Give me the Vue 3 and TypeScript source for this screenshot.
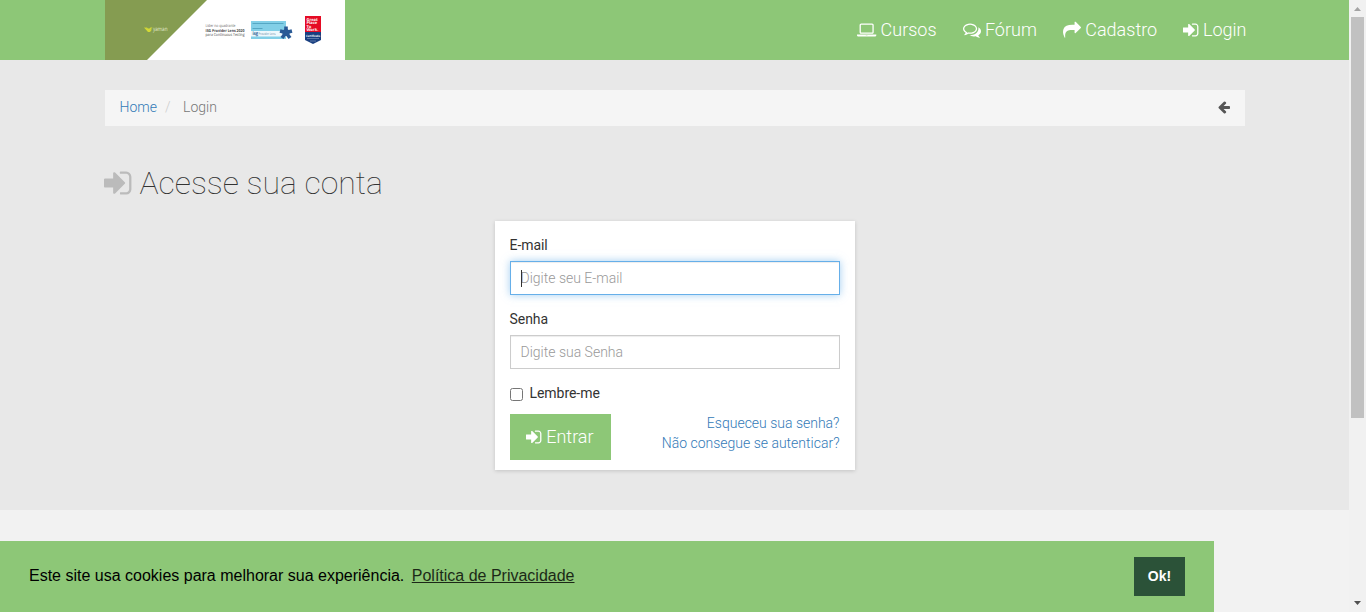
<script setup lang="ts">
import { onMounted, ref } from 'vue'

interface Icon { width: number; path: string }

const icons: Record<string, Icon> = {
  signIn: { width: 1536, path: 'M1184 896q0 26-19 45l-544 544q-19 19-45 19t-45-19-19-45v-288H64q-26 0-45-19T0 1088V704q0-26 19-45t45-19h448V352q0-26 19-45t45-19 45 19l544 544q19 19 19 45zm352-352v704q0 119-84.5 203.5T1248 1536H928q-13 0-22.500-9.500t-9.500-22.500q0-4-1-20t-.5-26.500 3-23.500 10-19.500 20.500-6.500h320q66 0 113-47t47-113V544q0-66-47-113t-113-47H928l-11.500-1-11.500-3-8-5.500-7-9-2-13.500q0-4-1-20t-.5-26.500 3-23.500 10-19.500 20.500-6.500h320q119 0 203.500 84.500T1536 544z' },
  laptop: { width: 1920, path: 'M416 1280q-66 0-113-47t-47-113V416q0-66 47-113t113-47h1088q66 0 113 47t47 113v704q0 66-47 113t-113 47H416zM384 416v704q0 13 9.500 22.500t22.500 9.500h1088q13 0 22.500-9.500t9.500-22.500V416q0-13-9.500-22.500T1504 384H416q-13 0-22.500 9.500T384 416zm1376 928h160v96q0 40-47 68t-113 28H160q-66 0-113-28t-47-68v-96h1760zm-720 96q16 0 16-16t-16-16H880q-16 0-16 16t16 16h160z' },
  comments: { width: 1792, path: 'M704 384q-153 0-286 52T206.500 577 128 768q0 82 53 158t149 132l97 56-35 84q34-20 62-39l44-31 53 10q78 14 153 14 153 0 286-52t211.500-141 78.500-191-78.500-191T990 436 704 384zm0-128q191 0 353.500 68.500t256.500 186.500 94 257-94 257-256.500 186.500T704 1280q-86 0-176-16-124 88-278 128-36 9-86 16h-3q-11 0-20.500-8t-11.500-21q-1-3-1-6.500t.5-6.500 2-6l2.500-5 3.500-5.500 4-5 4.500-5 4-4.500q5-6 23-25t26-29.500 22.500-29 25-38.500 20.500-44q-124-72-195-177T0 768q0-139 94-257t256.500-186.500T704 256zm822 1169q10 24 20.500 44t25 38.500 22.500 29 26 29.500 23 25q1 1 4 4.500t4.500 5 4 5 3.500 5.500l2.500 5 2 6 .5 6.500-1 6.500q-3 14-13 22t-22 7q-50-7-86-16-154-40-278-128-90 16-176 16-271 0-472-132 58 4 88 4 161 0 309-45t264-129q125-92 192-212t67-254q0-77-23-152 129 71 204 178t75 230q0 120-71 224.500t-195 176.500z' },
  share: { width: 1792, path: 'M1792 640q0 26-19 45l-512 512q-19 19-45 19t-45-19-19-45V896H928q-98 0-175.500 6t-154 21.500-133 42.500-105.500 69.500-80 101-48.500 138.500-17.500 181q0 55 5 123 0 6 2.500 23.500t2.500 26.500q0 15-8.500 25t-23.500 10q-16 0-28-17-7-9-13-22t-13.500-30-10.500-24Q0 1286 0 1120q0-199 53-333 162-403 875-403h224V128q0-26 19-45t45-19 45 19l512 512q19 19 19 45z' },
  arrowLeft: { width: 1536, path: 'M1536 896v128q0 53-32.500 90.500T1419 1152H715l293 294q38 36 38 90t-38 90l-75 76q-37 37-90 37-52 0-91-37L101 1050q-37-37-37-90 0-52 37-91l651-650q38-38 91-38 52 0 90 38l75 74q38 38 38 91t-38 91L715 768h704q52 0 84.500 37.500T1536 896z' },
}

const nav = [
  { label: 'Cursos', icon: 'laptop' },
  { label: 'Fórum', icon: 'comments' },
  { label: 'Cadastro', icon: 'share' },
  { label: 'Login', icon: 'signIn' },
]

const email = ref('')
const password = ref('')
const remember = ref(false)
const emailInput = ref<HTMLInputElement | null>(null)
onMounted(() => emailInput.value?.focus())
</script>

<template>
  <div class="window">
    <div class="page">
      <header class="topbar">
        <div class="container bar">
          <a class="brand" href="#">
            <svg width="240" height="60" viewBox="0 0 240 60">
              <rect width="240" height="60" fill="#fff" />
              <path d="M0 0H102L42 60H0Z" fill="#859c51" />
              <path d="M39 27.500h3l1.500 2h2l2-2h-2l-1 1M39 27.500l4 4.500h2l2-2.500" fill="#d3d935" />
              <text x="48" y="31.200" font-size="6" fill="#e4ebcf" textLength="14.500" lengthAdjust="spacingAndGlyphs">yaman</text>
              <text x="100.500" y="27.300" font-size="4" fill="#666" textLength="30" lengthAdjust="spacingAndGlyphs">Líder no quadrante</text>
              <text x="100.500" y="31.700" font-size="4" font-weight="700" fill="#444" textLength="39" lengthAdjust="spacingAndGlyphs">ISG Provider Lens 2020</text>
              <text x="100.500" y="36" font-size="4" fill="#444" textLength="39" lengthAdjust="spacingAndGlyphs">para Continuous Testing</text>
              <rect x="146" y="21" width="35" height="18" fill="#82cfe7" />
              <path d="M147.500 23.500h31M147.500 28.500h10" stroke="#55a7c4" stroke-width="1" />
              <rect x="146" y="31" width="35" height="5.500" fill="#eef8fc" />
              <text x="147.500" y="35.300" font-size="5" font-weight="700" fill="#24598d" textLength="5.500" lengthAdjust="spacingAndGlyphs">isg</text>
              <text x="153.500" y="35" font-size="3.500" fill="#587f9c" textLength="17" lengthAdjust="spacingAndGlyphs">Provider Lens</text>
              <path d="M181 32.500V26.500M181 32.500l6-1.500M181 32.500l4 5.500M181 32.500l-4 5.500M181 32.500l-6-1.500" stroke="#2a5a96" stroke-width="3.600" />
              <circle cx="181" cy="32.500" r="3.600" fill="#2a5a96" />
              <path d="M200 16h16v17h-16z" fill="#e50b24" />
              <path d="M200 32h16v8l-8 4-8-4z" fill="#193f80" />
              <g fill="#fff" font-size="4" font-weight="700">
                <text x="201.500" y="20.500">Great</text>
                <text x="201.500" y="24">Place</text>
                <text x="201.500" y="27.700">To</text>
                <text x="201.500" y="31.300">Work.</text>
                <text x="201" y="36.500" font-size="3" textLength="14" lengthAdjust="spacingAndGlyphs">Certificada</text>
              </g>
              <path d="M202 38.500h12M205 41h6" stroke="#7990b8" stroke-width=".7" />
            </svg>
          </a>
          <nav class="nav">
            <a v-for="item in nav" :key="item.label" href="#">
              <svg class="fa" :viewBox="`0 0 ${icons[item.icon].width} 1792`"><path :d="icons[item.icon].path" /></svg>
              {{ item.label }}
            </a>
          </nav>
        </div>
      </header>

      <main>
        <div class="container">
          <div class="breadcrumb">
            <a href="#">Home</a><span class="slash">/</span><span class="current">Login</span>
            <svg class="fa back" viewBox="0 0 1536 1792"><path :d="icons.arrowLeft.path" /></svg>
          </div>
          <h1>
            <svg class="fa" viewBox="0 0 1536 1792"><path :d="icons.signIn.path" /></svg>
            <span>Acesse sua conta</span>
          </h1>
          <form class="card" @submit.prevent>
            <label for="email">E-mail</label>
            <div class="entry">
              <input id="email" ref="emailInput" v-model="email" class="field active" type="text" placeholder="Digite seu E-mail" />
              <span class="caret"></span>
            </div>
            <label for="password">Senha</label>
            <input id="password" v-model="password" class="field" type="password" placeholder="Digite sua Senha" />
            <label class="remember"><input v-model="remember" type="checkbox" />Lembre-me</label>
            <div class="actions">
              <button class="enter" type="submit">
                <svg class="fa" viewBox="0 0 1536 1792"><path :d="icons.signIn.path" /></svg>
                Entrar
              </button>
              <div class="links">
                <a href="#">Esqueceu sua senha?</a>
                <a href="#">Não consegue se autenticar?</a>
              </div>
            </div>
          </form>
        </div>
      </main>
    </div>

    <div class="scrollbar">
      <svg width="17" height="17" viewBox="0 0 17 17"><path d="M5 11h7L8.500 7z" fill="#a3a3a3" /></svg>
      <div class="thumb"></div>
      <svg width="17" height="17" viewBox="0 0 17 17"><path d="M5 6h7L8.500 10z" fill="#505050" /></svg>
    </div>

    <div class="cookies">
      <p>Este site usa cookies para melhorar sua experiência. <a href="#">Política de Privacidade</a></p>
      <button type="button">Ok!</button>
    </div>
  </div>
</template>

<style>
html, body { margin: 0; overflow: hidden; }
</style>

<style scoped>
* { box-sizing: border-box; }
.window {
  position: relative;
  display: flex;
  height: 612px;
  overflow: hidden;
  background: #f2f2f2;
  font: 300 14px/20px Roboto, sans-serif;
  color: #333;
}
.page { flex: 1; }
a { color: #337ab7; text-decoration: none; }
.fa { height: 1em; width: auto; fill: currentColor; vertical-align: -0.143em; overflow: visible; }
.container { width: 1140px; margin: 0 auto; }
.topbar { height: 60px; background: #8dc777; }
.bar { display: flex; justify-content: space-between; }
.brand, .brand svg { display: block; height: 60px; }
.brand { font-weight: 400; }
.brand text { font-family: "Open Sans", sans-serif; text-rendering: geometricPrecision; }
.nav { display: flex; gap: 26px; margin-right: -2px; font-size: 18px; line-height: 60px; }
.nav a { color: #fff; white-space: nowrap; }
main { height: 450px; padding-top: 30px; background: #e8e8e8; }
.breadcrumb { display: flex; align-items: center; height: 36px; padding: 0 15px 2px; background: #f5f5f5; }
.slash { margin: 0 12.5px 0 8px; color: #ccc; }
.current { color: #777; }
.back { margin-left: auto; color: #555; }
h1 { display: flex; align-items: center; gap: 8px; height: 35px; margin: 40px 0 20px -.5px; font-size: 32px; font-weight: 100; line-height: 35px; }
h1 .fa { margin-bottom: 2px; color: #bbb; }
.card { width: 360px; height: 249px; margin: 0 auto; padding: 14px 15px; background: #fff; box-shadow: 0 1px 4px rgba(0, 0, 0, .16); }
.card label { display: block; margin-bottom: 6px; font-weight: 400; letter-spacing: -.05px; }
.entry { position: relative; }
.caret { position: absolute; left: 11px; top: 9px; width: 1px; height: 17px; background: #333; }
.field { display: block; width: 330px; height: 34px; margin: 0 0 14px; padding: 6px 10px; border: 1px solid #ccc; border-radius: 0; outline: 0; box-shadow: inset 0 1px 1px rgba(0, 0, 0, .075); background: #fff; color: #555; caret-color: transparent; font: inherit; }
.field::placeholder { color: #999; opacity: 1; }
.active { border-color: #66afe9; box-shadow: inset 0 1px 1px rgba(0, 0, 0, .075), 0 0 8px rgba(102, 175, 233, .6); }
.card .remember { display: flex; align-items: center; margin-bottom: 11px; }
.remember input { width: 13px; height: 13px; margin: 2px 7px 0 0; }
.actions { display: flex; justify-content: space-between; }
.enter { width: 101px; height: 46px; padding: 0; border: 0; background: #8dc777; color: #fff; font: 300 18px/24px Roboto, sans-serif; }
.links { display: flex; flex-direction: column; align-items: flex-end; margin-top: -1px; }
.scrollbar { display: flex; flex-direction: column; width: 17px; background: #f1f1f1; }
.scrollbar svg { display: block; }
.thumb { width: 13px; height: 401px; margin: 0 2px auto; background: #c1c1c1; }
.cookies { position: absolute; left: 0; bottom: 0; display: flex; align-items: center; justify-content: space-between; width: 1214px; height: 71px; padding: 0 29px; background: #8dc777; color: #000; font: 16px/24px "Liberation Sans", Arial, sans-serif; }
.cookies p { margin: 0 0 2px; }
.cookies a { margin-left: 3px; color: #000; opacity: .8; text-decoration: underline; }
.cookies button { width: 51px; height: 39px; margin-bottom: 1px; padding: 0; border: 0; background: #2b5238; color: #fff; font: 700 14px "Liberation Sans", Arial, sans-serif; }
</style>
